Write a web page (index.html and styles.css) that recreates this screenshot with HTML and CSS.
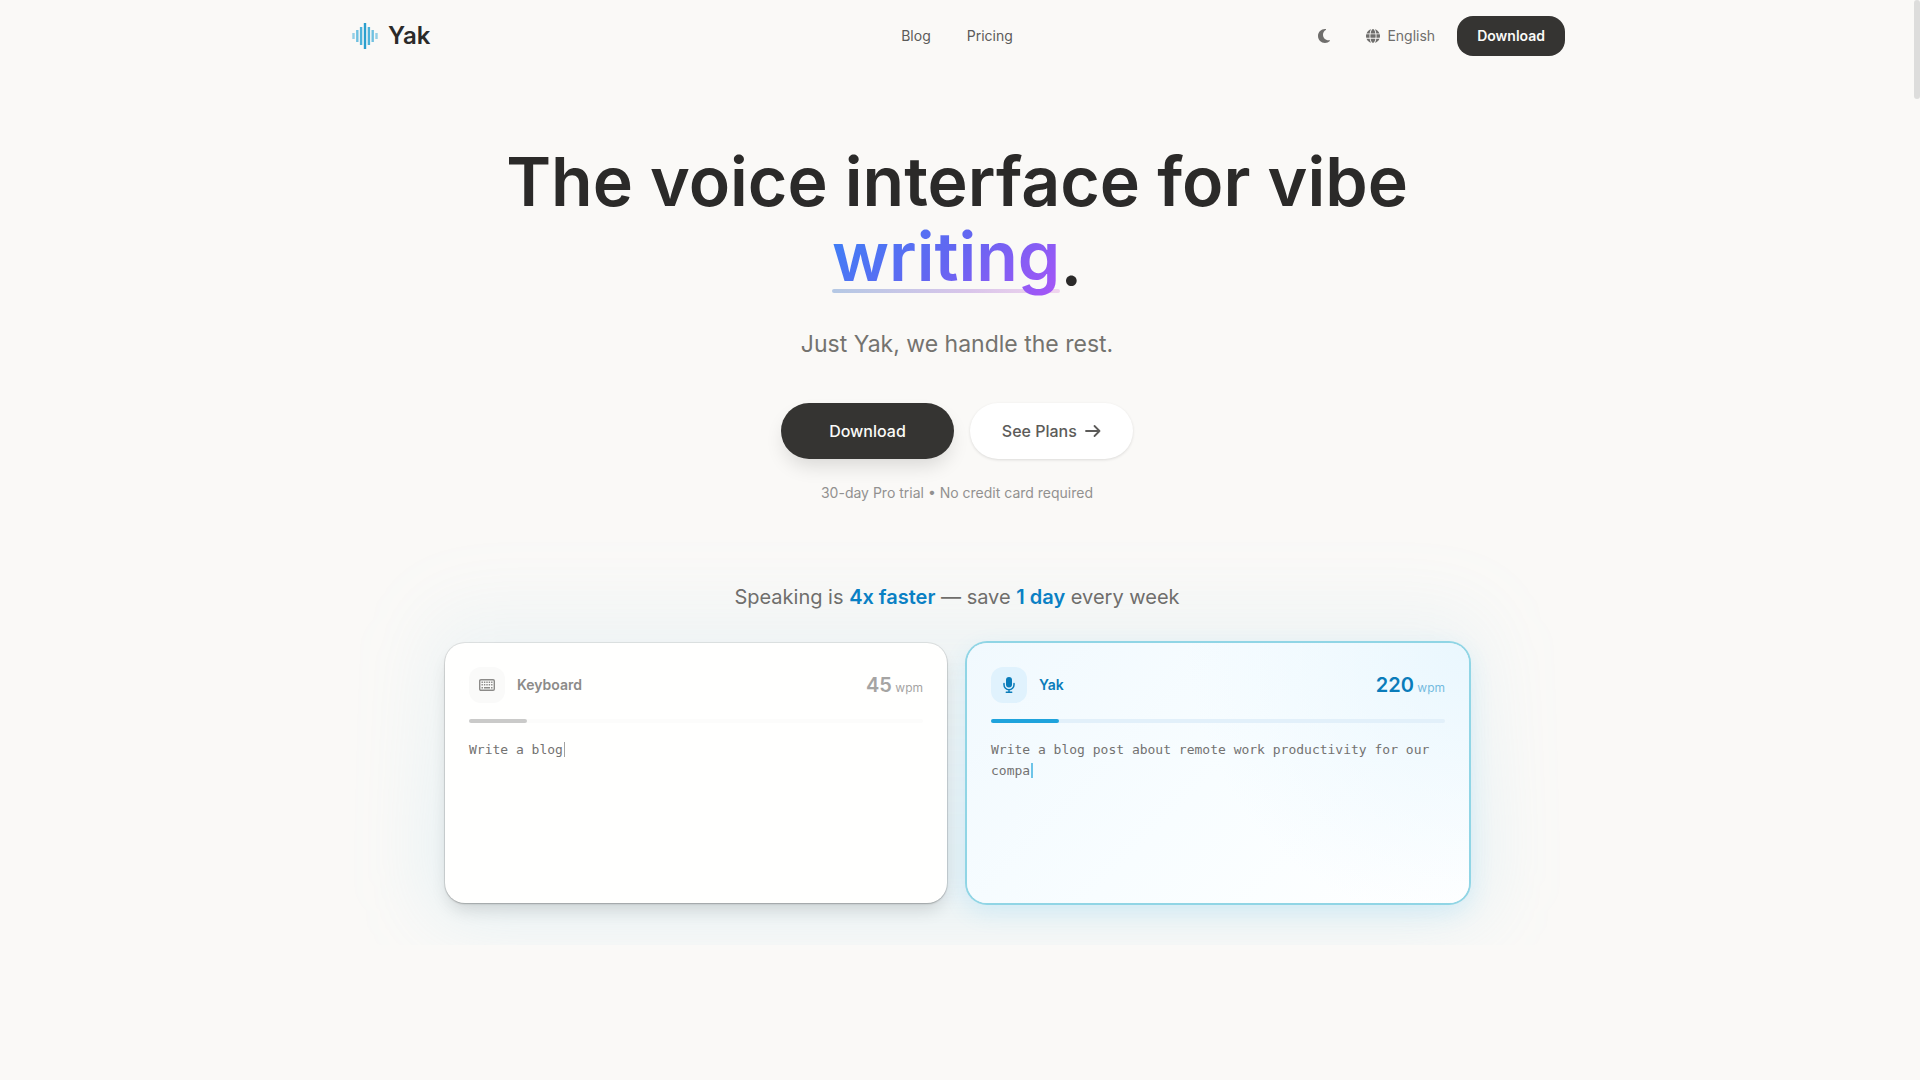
FILE: index.html
```html
<!DOCTYPE html>
<html lang="en">
<head>
    <meta charset="UTF-8">
    <meta name="viewport" content="width=device-width, initial-scale=1.0">
    <title>Yak</title>
    <link rel="stylesheet" href="styles.css">
</head>
<body>
    <header class="navbar">
        <a class="logo" href="#">
            <svg class="logo-mark" viewBox="0 0 26 26" fill="none" stroke-width="2.400">
                <path d="M1.500 10v6M24.500 10v6" stroke="#93cfe6"/>
                <path d="M5.300 7v12M20.700 7v12" stroke="#6fc0e0"/>
                <path d="M9.100 4v18M16.900 4v18" stroke="#4db3da"/>
                <path d="M13 0v26" stroke="#2a9fce"/>
            </svg>
            <span>Yak</span>
        </a>
        <nav class="nav-links">
            <a href="#">Blog</a>
            <a href="#">Pricing</a>
        </nav>
        <div class="nav-actions">
            <button class="icon-button" type="button" aria-label="Dark mode">
                <svg width="16" height="16" viewBox="0 0 384 512" fill="currentColor"><path d="M223.500 32C100 32 0 132.300 0 256s100 224 223.500 224c60.600 0 115.500-24.200 155.800-63.400 5-4.900 6.300-12.500 3.100-18.700s-10.100-9.700-17-8.500c-9.800 1.700-19.800 2.600-30.100 2.600-96.900 0-175.500-78.800-175.500-176 0-65.800 36-123.100 89.300-153.300 6.100-3.500 9.200-10.500 7.700-17.300s-7.300-11.900-14.300-12.500c-6.300-.5-12.600-.8-19-.8z"/></svg>
            </button>
            <button class="language" type="button">
                <svg width="14" height="14" viewBox="0 0 512 512" fill="currentColor"><path d="M352 256c0 22.200-1.200 43.600-3.300 64H163.300c-2.200-20.400-3.300-41.800-3.300-64s1.200-43.600 3.300-64h185.400c2.200 20.400 3.300 41.800 3.300 64zm28.800-64h123.100c5.300 20.500 8.100 41.900 8.100 64s-2.800 43.500-8.100 64H380.800c2.100-20.600 3.200-42 3.200-64s-1.100-43.400-3.200-64zm112.600-32H376.700c-10-63.900-29.800-117.400-55.300-151.600C399.800 29.100 463.400 85.900 493.400 160zm-149.100 0H167.700c6.100-36.400 15.500-68.600 27-94.700 10.500-23.600 22.200-40.700 33.500-51.500C239.400 3.200 248.700 0 256 0s16.600 3.200 27.800 13.800c11.300 10.800 23 27.900 33.500 51.500 11.600 26 20.900 58.200 27 94.700zm-209 0H18.600C48.600 85.900 112.200 29.100 190.600 8.400 165.100 42.600 145.300 96.100 135.300 160zM8.100 192h123.100c-2.100 20.600-3.200 42-3.200 64s1.100 43.400 3.200 64H8.100C2.800 299.500 0 278.100 0 256s2.800-43.500 8.100-64zm186.600 254.600c-11.600-26-20.900-58.200-27-94.600h176.600c-6.100 36.400-15.500 68.600-27 94.600-10.500 23.600-22.200 40.700-33.500 51.500C272.600 508.800 263.300 512 256 512s-16.600-3.200-27.800-13.800c-11.300-10.800-23-27.900-33.500-51.600zM135.300 352c10 63.900 29.800 117.400 55.300 151.600C112.200 482.900 48.600 426.100 18.600 352h116.700zm358.100 0c-30 74.100-93.600 130.900-171.900 151.600 25.500-34.200 45.200-87.700 55.300-151.600h116.600z"/></svg>
                <span>English</span>
            </button>
            <a class="nav-download" href="#">Download</a>
        </div>
    </header>

    <main>
        <section class="hero">
            <h1>The voice interface for vibe <span class="highlight"><span class="gradient-text">writing</span></span>.</h1>
            <p class="subtitle">Just Yak, we handle the rest.</p>
            <div class="hero-buttons">
                <a class="btn btn-dark" href="#">Download</a>
                <a class="btn btn-light" href="#">
                    See Plans
                    <svg width="16" height="16" viewBox="0 0 16 16" fill="none" stroke="currentColor" stroke-width="1.800" stroke-linecap="round" stroke-linejoin="round"><path d="M1 8h13.500M9.500 3l5 5-5 5"/></svg>
                </a>
            </div>
            <p class="trial-note">30-day Pro trial • No credit card required</p>
        </section>

        <section class="comparison">
            <h2>Speaking is <strong>4x faster</strong> — save <strong>1 day</strong> every week</h2>
            <div class="cards">
                <article class="card">
                    <div class="card-header">
                        <span class="card-icon">
                            <svg width="16" height="12" viewBox="0 0 16 12" fill="none" stroke="currentColor"><rect x=".7" y=".7" width="14.600" height="10.600" rx="1.200" stroke-width="1.400"/><path d="M2.500 3.200h11M2.500 5.800h11" stroke-width="1.500" stroke-dasharray="1.400 1"/><path d="M2.500 8.700h1.500M5 8.700h6M12 8.700h1.500" stroke-width="1.400"/></svg>
                        </span>
                        <h3>Keyboard</h3>
                        <p class="speed"><b>45</b> wpm</p>
                    </div>
                    <div class="progress"><div class="progress-fill" style="width: 12.8%"></div></div>
                    <p class="typing">Write a blog<span class="cursor"></span></p>
                </article>
                <article class="card card-yak">
                    <div class="card-header">
                        <span class="card-icon">
                            <svg width="12" height="16" viewBox="0 0 12 16"><rect x="3" y="0" width="6" height="10.500" rx="3" fill="currentColor"/><path d="M1 6.500v1.200a5 5 0 0 0 10 0V6.500M6 12.700v2.500M3.300 15.200h5.400" fill="none" stroke="currentColor" stroke-width="1.500" stroke-linecap="round"/></svg>
                        </span>
                        <h3>Yak</h3>
                        <p class="speed"><b>220</b> wpm</p>
                    </div>
                    <div class="progress"><div class="progress-fill" style="width: 15%"></div></div>
                    <p class="typing">Write a blog post about remote work productivity for our compa<span class="cursor"></span></p>
                </article>
            </div>
        </section>
    </main>
    <div class="scroll-thumb"></div>
</body>
</html>
```
FILE: styles.css
```css
* {
    box-sizing: border-box;
}
body {
    margin: 0;
    padding-right: 6px; /* room for the scroll thumb */
    min-height: 100vh;
    background: #faf9f7;
    color: #2b2a29;
    font-family: Inter, "Liberation Sans", sans-serif;
    font-size: 14px;
    line-height: 20px;
}
h1, h2, h3, p {
    margin: 0;
}
a {
    color: inherit;
    text-decoration: none;
}
button {
    border: none;
    background: none;
    color: inherit;
    font: inherit;
    cursor: pointer;
}

/* Navbar */
.navbar {
    display: grid;
    grid-template-columns: 1fr auto 1fr;
    align-items: center;
    max-width: 1280px;
    height: 72px;
    margin: 0 auto;
    padding: 0 32px;
    color: #6f6e6c;
}
.logo {
    display: flex;
    align-items: center;
    gap: 10px;
    padding-left: 3px;
    color: #2b2a29;
    font-size: 24px;
    font-weight: 600;
    line-height: 32px;
}
.logo-mark {
    width: 26px;
    height: 26px;
}
.nav-links {
    display: flex;
    gap: 36px;
    color: #5c5b59;
}
.nav-actions {
    display: flex;
    align-items: center;
    justify-content: flex-end;
    gap: 12px;
}
.icon-button {
    display: flex;
    align-items: center;
    justify-content: center;
    width: 40px;
    height: 40px;
    padding: 0;
}
.language {
    display: flex;
    align-items: center;
    gap: 7px;
    padding: 8px 10px;
}
.nav-download {
    padding: 10px 20px;
    border-radius: 16px;
    background: #353432;
    color: #fafaf8;
    font-weight: 600;
}

/* Hero */
.hero {
    max-width: 1024px;
    margin: 0 auto;
    padding-top: 70px;
    text-align: center;
}
h1 {
    font-size: 68px;
    font-weight: 600;
    line-height: 79px;
}
.highlight {
    position: relative;
    z-index: 0;
    display: inline-block;
    line-height: 71px;
    vertical-align: 4px;
}
.highlight::after {
    content: "";
    position: absolute;
    z-index: -1;
    left: 0;
    right: 0;
    bottom: 3px;
    height: 4px;
    border-radius: 2px;
    background: linear-gradient(90deg, #b4c8e4, #d9c5ea 60%, #f0d5ee);
}
.gradient-text {
    display: block;
    padding-bottom: 4px;
    background: linear-gradient(135deg, #3b82f6, #6366f1 50%, #a855f7);
    background-clip: text;
    -webkit-background-clip: text;
    color: transparent;
}
.subtitle {
    margin-top: 26px;
    color: #74736f;
    font-size: 23px;
    line-height: 36px;
}
.hero-buttons {
    display: flex;
    justify-content: center;
    gap: 16px;
    margin-top: 41px;
}
.btn {
    display: flex;
    align-items: center;
    gap: 8px;
    height: 56px;
    padding: 0 32px;
    border-radius: 28px;
    font-size: 16px;
    font-weight: 500;
}
.btn-dark {
    padding: 0 48px;
    background: #353432;
    color: #fafaf8;
    box-shadow: 0 10px 20px -4px rgba(0, 0, 0, 0.14);
}
.btn-light {
    background: #fff;
    color: #5c5b59;
    box-shadow: 0 1px 3px rgba(0, 0, 0, 0.12);
}
.trial-note {
    margin-top: 24px;
    color: #929190;
}

/* Speed comparison */
.comparison {
    position: relative;
    z-index: 0;
    margin-top: 32px;
    padding: 48px 24px 42px;
    overflow: hidden;
}
/* soft glow behind the cards, cut off at the section's end */
.comparison::before {
    content: "";
    position: absolute;
    z-index: -1;
    top: 72px;
    bottom: 24px;
    left: 50%;
    width: 1060px;
    border-radius: 40px;
    background: linear-gradient(180deg, rgba(120, 190, 225, 0.07), rgba(120, 200, 235, 0.17));
    filter: blur(36px);
    transform: translateX(-50%);
}
h2 {
    color: #6f6e6c;
    font-size: 20px;
    font-weight: 400;
    line-height: 28px;
    text-align: center;
}
h2 strong {
    color: #0a80c4;
    font-weight: 600;
}
.cards {
    display: grid;
    grid-template-columns: 1fr 1fr;
    gap: 20px;
    max-width: 1024px;
    margin: 32px auto 0;
}
.card {
    padding: 24px;
    border-radius: 20px;
    background: #fffffe;
    box-shadow: 0 0 0 1px rgba(0, 0, 0, 0.08), 0 1px 2px rgba(0, 0, 0, 0.2), 0 10px 18px -4px rgba(0, 0, 0, 0.14);
}
.card-header {
    display: flex;
    align-items: center;
    gap: 12px;
    color: #8c8b89;
}
.card-icon {
    display: flex;
    align-items: center;
    justify-content: center;
    width: 36px;
    height: 36px;
    border-radius: 12px;
    background: #fafaf9;
}
h3 {
    flex: 1;
    font-size: 14px;
    font-weight: 600;
}
.speed {
    padding-top: 2px;
    color: #a5a4a3;
    font-size: 12px;
    line-height: 28px;
}
.speed b {
    font-size: 20px;
    font-weight: 600;
}
.progress {
    height: 4px;
    margin: 16px 0;
    border-radius: 2px;
    background: #fcfcfb;
}
.progress-fill {
    height: 4px;
    border-radius: 2px;
    background: #cacac9;
}
.typing {
    min-height: 140px;
    color: #737271;
    font-family: "DejaVu Sans Mono", "Liberation Mono", monospace;
    font-size: 13px;
    line-height: 21px;
}
.cursor {
    display: inline-block;
    width: 1px;
    height: 15px;
    margin-left: 1px;
    background: #a3a3a2;
    vertical-align: -3px;
}
.card-yak {
    background: radial-gradient(circle at 100% 0, #eaf7fe, rgba(234, 247, 254, 0) 50%), linear-gradient(135deg, #f1f9fe, #f8fdff 50%, #fff);
    box-shadow: 0 0 0 2px #90d5e5, 0 8px 24px rgba(56, 189, 248, 0.16);
}
.card-yak .card-header,
.card-yak .speed b {
    color: #0a7cba;
}
.card-yak .card-icon {
    background: #e0f2fd;
}
.card-yak .speed {
    color: #74bbe0;
}
.card-yak .progress {
    background: #e2f0fa;
}
.card-yak .progress-fill {
    background: #1fa3dc;
}
.card-yak .cursor {
    width: 2px;
    background: #6dc4e8;
}

.scroll-thumb {
    position: fixed;
    top: 0;
    right: 0;
    width: 6px;
    height: 99px;
    border-radius: 3px;
    background: #dddddc;
}
```
